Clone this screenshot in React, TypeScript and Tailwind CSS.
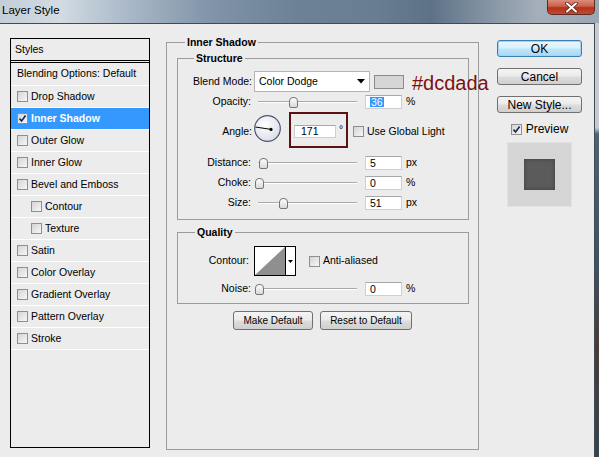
import React from "react";

const styleRows = [
  { label: "Drop Shadow" },
  { label: "Inner Shadow", on: true },
  { label: "Outer Glow" },
  { label: "Inner Glow" },
  { label: "Bevel and Emboss" },
  { label: "Contour", sub: true },
  { label: "Texture", sub: true },
  { label: "Satin" },
  { label: "Color Overlay" },
  { label: "Gradient Overlay" },
  { label: "Pattern Overlay" },
  { label: "Stroke" },
];

function Check({ on = false }: { on?: boolean }) {
  return (
    <span className="flex h-[11px] w-[11px] shrink-0 items-center justify-center border border-[#8e8f8f] bg-[linear-gradient(135deg,#d4d4d4,#f7f7f7)]">
      {on && (
        <svg viewBox="0 0 9 9" className="h-[9px] w-[9px]">
          <path d="M1.5 4.6 L3.6 7 L7.6 1.6" fill="none" stroke="#1d2a55" strokeWidth="1.7" />
        </svg>
      )}
    </span>
  );
}

function Slider({ at }: { at: number }) {
  return (
    <div className="relative ml-[3px] h-[14px] w-[105px] shrink-0">
      <div className="absolute left-[4px] top-[6px] h-[2px] w-[99px] border-t border-b border-t-[#a9a9a9] border-b-white" />
      <div
        className="absolute top-[2px] h-[11px] w-[9px] rounded-t-[4px] rounded-b-[2px] border border-[#767676] bg-[linear-gradient(180deg,#fdfdfd,#d9d9d9)]"
        style={{ left: at }}
      />
    </div>
  );
}

function Field({ children }: { children: React.ReactNode }) {
  return (
    <div className="ml-[6px] flex h-[14px] w-[37px] items-center border border-[#cfcfcf] border-t-[#a8a8a8] bg-white pl-[4px] leading-none">
      {children}
    </div>
  );
}

function SliderRow({ label, at, value, unit, cls }: { label: string; at: number; value: React.ReactNode; unit: string; cls: string }) {
  return (
    <div className={`flex h-[20px] items-center ${cls}`}>
      <span className="w-[73px] shrink-0 text-right">{label}</span>
      <Slider at={at} />
      <Field>{value}</Field>
      <span className="ml-[4px]">{unit}</span>
    </div>
  );
}

function Btn({ children, cls }: { children: React.ReactNode; cls: string }) {
  return (
    <div
      className={`flex items-center justify-center rounded-[3px] border border-[#707070] bg-[linear-gradient(180deg,#f4f4f4_0%,#ebebeb_48%,#dddddd_52%,#cfcfcf_100%)] ${cls}`}
    >
      {children}
    </div>
  );
}

export default function App() {
  return (
    <div className="flex h-[457px] w-[599px] flex-col overflow-hidden bg-[linear-gradient(180deg,#c4cbd2_0px,#c4cbd2_128px,#4e6272_134px,#3f505e_60%,#4a3c38_75%,#34444f_100%)] font-['Liberation_Sans',Arial,sans-serif] text-[10.5px] text-black">
      {/* title bar */}
      <div className="flex h-[23px] shrink-0 items-start justify-between bg-[linear-gradient(90deg,#c3ced9_0%,#d3dbe3_10%,#aebccb_20%,#8194a8_35%,#6c8196_50%,#6a7e92_62%,#5e7287_72%,#8796a6_82%,#a5afba_90%,#9aa6b2_100%)]">
        <span className="ml-[2px] mt-[3px] text-[11.5px] leading-[14px]">Layer Style</span>
        <div className="mr-[4px] flex h-[15px] w-[48px] items-center justify-center rounded-b-[5px] border border-t-0 border-[#5f2a22] bg-[linear-gradient(180deg,#dc8e7c_0%,#c9604a_45%,#b2321c_55%,#c4492f_100%)]">
          <svg width="13" height="11" viewBox="0 0 13 11">
            <path d="M2 1.5 L11 9.5 M11 1.5 L2 9.5" stroke="#5a2018" strokeWidth="3.6" strokeLinecap="round" />
            <path d="M2 1.5 L11 9.5 M11 1.5 L2 9.5" stroke="#ffffff" strokeWidth="2" strokeLinecap="round" />
          </svg>
        </div>
      </div>

      {/* body */}
      <div className="flex h-[434px] w-[595px] border-t border-r border-[#434a52] bg-[#ececec]">
        {/* styles list */}
        <div className="ml-[10px] mt-[14px] flex h-[410px] w-[140px] shrink-0 flex-col border border-black">
          <div className="flex h-[24px] shrink-0 items-center border-b-[3px] border-double border-black pl-[4px] pt-[1px]">Styles</div>
          <div className="flex h-[23px] shrink-0 items-center border-b border-white pl-[6px]">Blending Options: Default</div>
          {styleRows.map((r) => (
            <div
              key={r.label}
              className={`flex h-[22px] shrink-0 items-center gap-[3px] border-b border-white ${r.sub ? "pl-[20px]" : "pl-[6px]"} ${r.on ? "bg-[#3399ff] font-bold text-white" : ""}`}
            >
              <Check on={r.on} />
              <span>{r.label}</span>
            </div>
          ))}
        </div>

        {/* main group */}
        <fieldset className="ml-[16px] mt-[12px] h-[414px] w-[313px] min-w-0 shrink-0 border border-[#9c9c9c]">
          <legend className="ml-[18px] px-[2px] font-bold leading-[12px]">Inner Shadow</legend>

          <fieldset className="ml-[10px] mt-[4px] w-[292px] min-w-0 border border-[#9c9c9c] pb-[6px]">
            <legend className="ml-[16px] px-[2px] font-bold leading-[12px]">Structure</legend>

            <div className="mt-[7px] flex h-[21px] items-center">
              <span className="w-[74px] shrink-0 text-right">Blend Mode:</span>
              <div className="ml-[2px] flex h-[21px] w-[116px] shrink-0 items-center justify-between border border-[#b4b4b4] bg-white pl-[4px] pr-[4px]">
                <span>Color Dodge</span>
                <svg width="8" height="5" viewBox="0 0 8 5">
                  <path d="M0 0 H8 L4 4.5 Z" fill="#000" />
                </svg>
              </div>
              <div className="ml-[4px] h-[14px] w-[30px] shrink-0 border border-[#8c8c8c] bg-[#d5d5d5]" />
              <span className="ml-[8px] mt-[3px] whitespace-nowrap text-[20px] leading-none text-[#7e1011]">#dcdada</span>
            </div>

            <SliderRow
              label="Opacity:"
              at={35}
              value={<span className="bg-[#3399ff] px-[1px] text-white">36</span>}
              unit="%"
              cls=""
            />

            <div className="flex h-[36px] items-center">
              <span className="mt-[3px] w-[74px] shrink-0 text-right">Angle:</span>
              <svg width="27" height="27" viewBox="0 0 27 27" className="-mt-[4px] ml-[2px] shrink-0">
                <defs>
                  <radialGradient id="dial" cx="40%" cy="35%" r="70%">
                    <stop offset="0" stopColor="#ffffff" />
                    <stop offset="1" stopColor="#d9dde5" />
                  </radialGradient>
                </defs>
                <circle cx="13.5" cy="13.5" r="12.8" fill="url(#dial)" stroke="#4b5774" strokeWidth="1.2" />
                <line x1="1.4" y1="12" x2="17" y2="14.4" stroke="#000" strokeWidth="1" />
                <circle cx="17" cy="14.4" r="1.6" fill="#000" />
              </svg>
              <div className="ml-[8px] flex h-[36px] w-[59px] shrink-0 items-start border-2 border-[#5e1111] pl-[3px] pt-[11px]">
                <div className="flex h-[13px] w-[42px] items-center border border-[#cfcfcf] border-t-[#a8a8a8] bg-white pl-[6px] leading-none">171</div>
                <span className="ml-[3px] -mt-[3px] leading-[14px]">°</span>
              </div>
              <span className="ml-[5px] mt-[3px] flex items-center gap-[3px]">
                <Check />
                <span>Use Global Light</span>
              </span>
            </div>

            <SliderRow label="Distance:" at={5} value="5" unit="px" cls="mt-[5px]" />
            <SliderRow label="Choke:" at={1} value="0" unit="%" cls="" />
            <SliderRow label="Size:" at={25} value="51" unit="px" cls="" />
          </fieldset>

          <fieldset className="ml-[10px] mt-[6px] w-[292px] min-w-0 border border-[#9c9c9c] pb-[4px]">
            <legend className="ml-[17px] px-[2px] font-bold leading-[12px]">Quality</legend>

            <div className="mt-[8px] flex h-[30px] items-center">
              <span className="w-[71px] shrink-0 text-right">Contour:</span>
              <div className="ml-[5px] flex h-[30px] w-[42px] shrink-0 border border-black bg-white">
                <svg width="30" height="28" viewBox="0 0 30 28" className="shrink-0">
                  <polygon points="0,28 30,0 30,28" fill="#8f8f8f" />
                </svg>
                <div className="flex w-[10px] items-center justify-center border-l border-black">
                  <svg width="5" height="3" viewBox="0 0 5 3">
                    <path d="M0 0 H5 L2.5 3 Z" fill="#000" />
                  </svg>
                </div>
              </div>
              <span className="ml-[13px] flex items-center gap-[3px]">
                <Check />
                <span>Anti-aliased</span>
              </span>
            </div>

            <SliderRow label="Noise:" at={1} value="0" unit="%" cls="mt-[3px]" />
          </fieldset>

          <div className="mt-[7px] flex justify-center gap-[7px] text-[10px]">
            <Btn cls="h-[19px] w-[80px]">Make Default</Btn>
            <Btn cls="h-[19px] w-[92px]">Reset to Default</Btn>
          </div>
        </fieldset>

        {/* right column */}
        <div className="ml-[18px] mt-[16px] flex w-[85px] shrink-0 flex-col items-center text-[12px]">
          <div className="flex h-[17px] w-[85px] items-center justify-center rounded-[3px] border border-[#3c7fb1] bg-[linear-gradient(180deg,#eaf6fd_0%,#d9f0fc_48%,#bee6fd_52%,#a7d9f5_100%)] shadow-[inset_0_0_0_1px_#9fd5f2]">
            OK
          </div>
          <Btn cls="mt-[11px] h-[17px] w-[85px]">Cancel</Btn>
          <Btn cls="mt-[11px] h-[17px] w-[85px]">New Style...</Btn>
          <div className="mt-[9px] flex h-[14px] items-center gap-[4px]">
            <Check on />
            <span>Preview</span>
          </div>
          <div className="mt-[6px] flex h-[65px] w-[65px] items-center justify-center border border-[#e2e2e2] bg-[#d5d5d5]">
            <div className="h-[31px] w-[31px] bg-[#5b5b5b] shadow-[inset_0_0_3px_1px_#474747]" />
          </div>
        </div>
      </div>
    </div>
  );
}
